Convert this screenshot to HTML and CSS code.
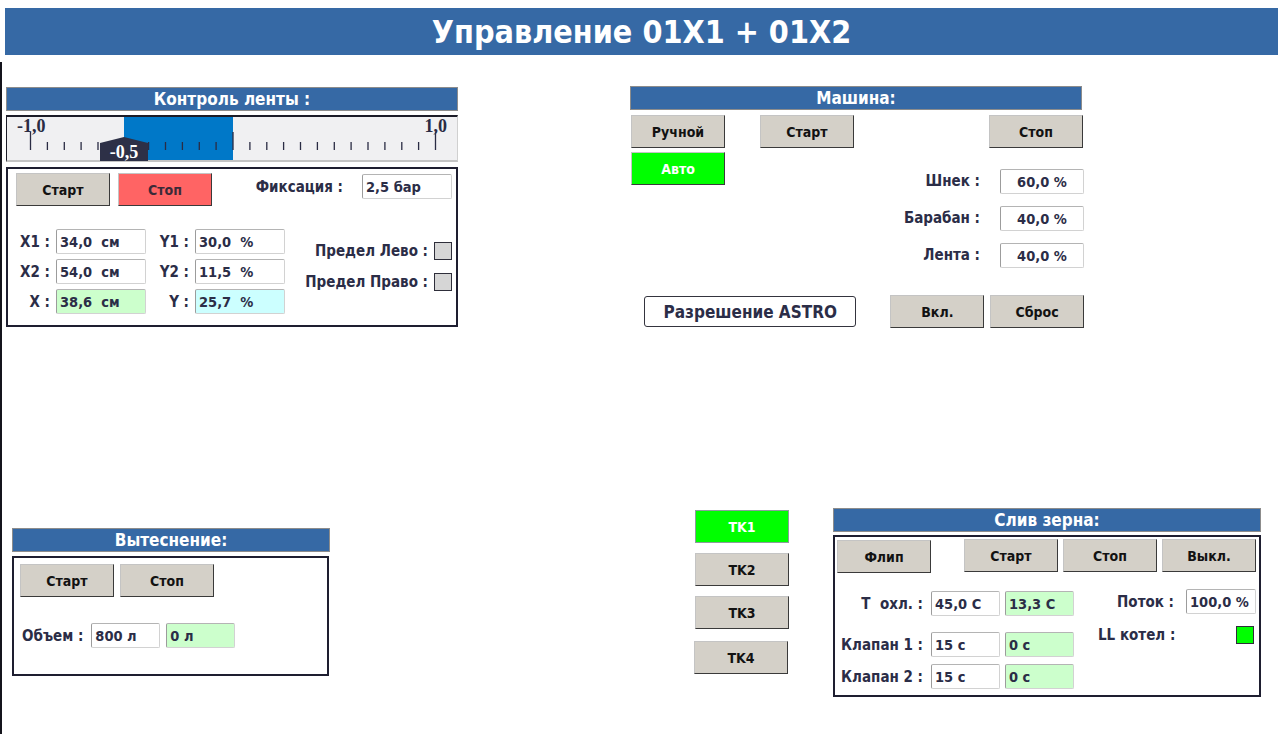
FILE: index.html
```html
<!DOCTYPE html>
<html lang="ru">
<head>
    <meta charset="UTF-8">
    <meta name="viewport" content="width=device-width, initial-scale=1.0">
    <title>Управление 01X1 + 01X2</title>
    <link rel="stylesheet" href="styles.css">
</head>
<body>
    <header class="title">Управление 01X1 + 01X2</header>

    <main class="screen">
        <div class="top-row">
            <!-- Контроль ленты -->
            <section class="belt">
                <div class="panel-head">Контроль ленты :</div>
                <div class="scale">
                    <svg width="450" height="43" viewBox="0 0 450 43">
                        <rect x="117" y="0" width="109" height="43" fill="#0078c8"/>
                        <path d="M23.5 15V33 M226 15V33 M428.5 15V33
                                 M40.4 25V33 M57.3 25V33 M74.1 25V33 M91 25V33 M107.9 25V33 M124.8 25V33
                                 M141.6 25V33 M158.5 25V33 M175.4 25V33 M192.3 25V33 M209.1 25V33
                                 M242.9 25V33 M259.8 25V33 M276.6 25V33 M293.5 25V33 M310.4 25V33
                                 M327.3 25V33 M344.1 25V33 M361 25V33 M377.9 25V33 M394.8 25V33 M411.6 25V33"
                              stroke="#2a2c44" stroke-width="1.3" fill="none"/>
                        <text class="scale-num" x="10" y="15">-1,0</text>
                        <text class="scale-num" x="440" y="15" text-anchor="end">1,0</text>
                        <polygon points="93,44 93,26 117,20 141,26 141,44" fill="#2d3047"/>
                        <text class="scale-ptr" x="117" y="41" text-anchor="middle">-0,5</text>
                    </svg>
                </div>
                <div class="box belt-box">
                    <div class="row">
                        <button class="btn">Старт</button>
                        <button class="btn btn-stop">Стоп</button>
                        <span class="label fix-label">Фиксация :</span>
                        <span class="field fix-field">2,5 бар</span>
                    </div>
                    <div class="coords">
                        <div class="xy">
                            <span class="label">X1 :</span><span class="field">34,0  см</span>
                            <span class="label">X2 :</span><span class="field">54,0  см</span>
                            <span class="label">X :</span><span class="field green">38,6  см</span>
                        </div>
                        <div class="xy xy2">
                            <span class="label">Y1 :</span><span class="field">30,0  %</span>
                            <span class="label">Y2 :</span><span class="field">11,5  %</span>
                            <span class="label">Y :</span><span class="field cyan">25,7  %</span>
                        </div>
                        <div class="limits">
                            <div class="limit"><span class="label">Предел Лево :</span><span class="lamp"></span></div>
                            <div class="limit"><span class="label">Предел Право :</span><span class="lamp"></span></div>
                        </div>
                    </div>
                </div>
            </section>

            <!-- Машина -->
            <section class="machine">
                <div class="panel-head">Машина:</div>
                <div class="row machine-btns">
                    <button class="btn">Ручной</button>
                    <button class="btn machine-start">Старт</button>
                    <button class="btn machine-stop">Стоп</button>
                </div>
                <div class="row machine-mid">
                    <button class="btn btn-on">Авто</button>
                    <div class="speeds">
                        <span class="label">Шнек :</span><span class="field center">60,0 %</span>
                        <span class="label">Барабан :</span><span class="field center">40,0 %</span>
                        <span class="label">Лента :</span><span class="field center">40,0 %</span>
                    </div>
                </div>
                <div class="row machine-foot">
                    <button class="astro">Разрешение ASTRO</button>
                    <button class="btn astro-on">Вкл.</button>
                    <button class="btn astro-reset">Сброс</button>
                </div>
            </section>
        </div>

        <div class="bottom-row">
            <!-- Вытеснение -->
            <section class="vyt">
                <div class="panel-head">Вытеснение:</div>
                <div class="box vyt-box">
                    <div class="row">
                        <button class="btn">Старт</button>
                        <button class="btn vyt-stop">Стоп</button>
                    </div>
                    <div class="row volume">
                        <span class="label">Объем :</span>
                        <span class="field small vol-set">800 л</span>
                        <span class="field small green vol-act">0 л</span>
                    </div>
                </div>
            </section>

            <div class="tanks">
                <button class="btn tk tk-on">TK1</button>
                <button class="btn tk">TK2</button>
                <button class="btn tk">TK3</button>
                <button class="btn tk tk4">TK4</button>
            </div>

            <!-- Слив зерна -->
            <section class="drain">
                <div class="panel-head">Слив зерна:</div>
                <div class="box drain-box">
                    <div class="row drain-btns">
                        <button class="btn flip">Флип</button>
                        <button class="btn drain-start">Старт</button>
                        <button class="btn">Стоп</button>
                        <button class="btn">Выкл.</button>
                    </div>
                    <div class="row drain-main">
                        <div class="valves">
                            <span class="label">T  охл. :</span><span class="field small">45,0 C</span><span class="field small green">13,3 C</span>
                            <span class="label">Клапан 1 :</span><span class="field small">15 с</span><span class="field small green">0 с</span>
                            <span class="label">Клапан 2 :</span><span class="field small">15 с</span><span class="field small green">0 с</span>
                        </div>
                        <div class="flow">
                            <div class="flow-row"><span class="label">Поток :</span><span class="field flow-field">100,0 %</span></div>
                            <div class="ll-row"><span class="label">LL котел :</span><span class="lamp lamp-on"></span></div>
                        </div>
                    </div>
                </div>
            </section>
        </div>
    </main>
</body>
</html>
```

FILE: styles.css
```css
* {
    box-sizing: border-box;
}

body {
    margin: 0;
    background-color: #fff;
    font-family: "DejaVu Sans Condensed", "DejaVu Sans", sans-serif;
    font-weight: bold;
    font-size: 14px;
    color: #2b2d47;
}

.title {
    margin: 8px 0 0 5px;
    height: 47px;
    display: flex;
    align-items: center;
    justify-content: center;
    background-color: #3669a5;
    color: #fff;
    font-size: 32px;
}

.screen {
    margin-top: 7px;
    height: 672px;
    padding-left: 4px;
    border-left: 2px solid #14141c;
}

.row {
    display: flex;
    align-items: flex-start;
}

.panel-head {
    height: 24px;
    display: flex;
    align-items: center;
    justify-content: center;
    background-color: #3669a5;
    border: 1px solid #8c8c8c;
    color: #fff;
    font-size: 17px;
}

.box {
    border: 2px solid #1e1e30;
    background-color: #fff;
}

.label {
    font-size: 15px;
    white-space: pre;
}

.field {
    height: 25px;
    display: flex;
    align-items: center;
    padding-left: 3px;
    background-color: #fff;
    border: 1px solid #d2d2d2;
    border-left-color: #9c9c9c;
    border-top-color: #b4b4b4;
    border-radius: 2px;
    white-space: pre;
    font-size: 14.5px;
}

.field.center {
    justify-content: center;
    padding-left: 0;
}

.field.small {
    width: 69px;
}

.green {
    background-color: #ccffcc;
}

.cyan {
    background-color: #ccffff;
}

.btn {
    width: 94px;
    height: 33px;
    padding: 0;
    font: inherit;
    color: #121212;
    background-color: #d4d0c8;
    border: 1px solid;
    border-color: #c4c4c4 #3a3a3a #3a3a3a #c4c4c4;
    cursor: pointer;
}

.btn-on {
    background-color: #00ff00;
    color: #fff;
}

.lamp {
    width: 18px;
    height: 18px;
    background-color: #d6d6d6;
    border: 1px solid #2e2e3a;
}

.lamp-on {
    background-color: #00ff00;
}

/* top row */
.top-row {
    display: flex;
    align-items: flex-start;
    height: 446px;
    padding-top: 24px;
}

.belt {
    width: 452px;
    margin-top: 1px;
}

.scale {
    margin-top: 4px;
    height: 47px;
    background-color: #f0f0f2;
    border-top: 2px solid #1c1c28;
    border-left: 1px solid #1c1c28;
    border-right: 1px solid #d0d0d0;
    border-bottom: 2px solid #c4c4c4;
}

.scale svg {
    display: block;
    overflow: visible;
}

.scale-num {
    font-family: "Liberation Serif", serif;
    font-weight: bold;
    font-size: 18px;
    fill: #2a2c44;
}

.scale-ptr {
    font-family: "Liberation Serif", serif;
    font-weight: bold;
    font-size: 18px;
    fill: #fff;
}

.belt-box {
    margin-top: 5px;
    height: 160px;
    padding: 4px 4px 0 8px;
}

.btn-stop {
    margin-left: 8px;
    background-color: #ff6464;
    color: #3a2a38;
}

.fix-label {
    margin-left: auto;
    margin-top: 5px;
}

.fix-field {
    width: 90px;
    margin-left: 19px;
    margin-top: 1px;
}

.coords {
    display: flex;
    margin-top: 23px;
}

.xy {
    display: grid;
    grid-template-columns: 34px 90px;
    grid-auto-rows: 25px;
    column-gap: 6px;
    row-gap: 5px;
}

.xy .label {
    align-self: center;
    text-align: right;
}

.xy2 {
    grid-template-columns: 37px 90px;
    margin-left: 6px;
}

.limits {
    margin-left: auto;
    padding-top: 13px;
    display: flex;
    flex-direction: column;
    gap: 13px;
}

.limit {
    display: flex;
    align-items: center;
    justify-content: flex-end;
    gap: 6px;
}

.machine {
    width: 454px;
    margin-left: 172px;
}

.machine .panel-head {
    width: 452px;
}

.machine-btns {
    margin-top: 5px;
    padding: 0 1px;
}

.machine-start {
    margin-left: 35px;
}

.machine-stop {
    margin-left: auto;
}

.machine-mid {
    margin-top: 4px;
    padding-left: 1px;
}

.speeds {
    margin-left: auto;
    padding-top: 17px;
    display: grid;
    grid-template-columns: auto 84px;
    grid-auto-rows: 24px;
    column-gap: 20px;
    row-gap: 13px;
}

.speeds .label {
    align-self: center;
    text-align: right;
}

.machine-foot {
    margin-top: 28px;
}

.astro {
    width: 213px;
    height: 31px;
    margin: 1px 0 0 14px;
    padding: 0;
    font: inherit;
    font-size: 17px;
    color: #2b2d47;
    background-color: #fff;
    border: 1px solid #34343e;
    border-radius: 3px;
}

.astro-on {
    margin-left: 34px;
}

.astro-reset {
    margin-left: 6px;
}

/* bottom row */
.bottom-row {
    display: flex;
    align-items: flex-start;
}

.vyt {
    width: 318px;
    margin: 20px 0 0 6px;
}

.vyt-box {
    width: 317px;
    height: 120px;
    margin-top: 4px;
    padding: 6px 0 0 6px;
}

.vyt-stop {
    margin-left: 6px;
}

.volume {
    align-items: center;
    margin: 26px 0 0 2px;
}

.vol-set {
    margin-left: 8px;
}

.vol-act {
    margin-left: 6px;
}

.tanks {
    display: flex;
    flex-direction: column;
    gap: 10px;
    margin: 2px 0 0 365px;
}

.tk-on {
    background-color: #00ff00;
    color: #fff;
    border-color: #8c9c9c;
}

.tk4 {
    margin: 2px 0 0 -1px;
}

.drain {
    width: 428px;
    margin-left: 44px;
}

.drain-box {
    height: 162px;
    margin-top: 3px;
    padding: 2px 3px 0 2px;
}

.drain-btns {
    gap: 5px;
}

.flip {
    margin-top: 1px;
}

.drain-start {
    margin-left: auto;
}

.drain-main {
    margin-top: 16px;
}

.valves {
    display: grid;
    grid-template-columns: 86px 69px 69px;
    grid-template-rows: 41px 32px 25px;
    column-gap: 8px;
    margin-top: 2px;
}

.valves .label {
    height: 25px;
    display: flex;
    align-items: center;
    justify-content: flex-end;
}

.valves .green {
    margin-left: -3px;
}

.flow {
    margin-left: auto;
    width: 158px;
}

.flow-row {
    display: flex;
    align-items: center;
    justify-content: flex-end;
}

.flow-field {
    width: 70px;
    margin-left: 12px;
}

.ll-row {
    display: flex;
    align-items: center;
    justify-content: space-between;
    margin-top: 12px;
    padding-right: 2px;
}
```
